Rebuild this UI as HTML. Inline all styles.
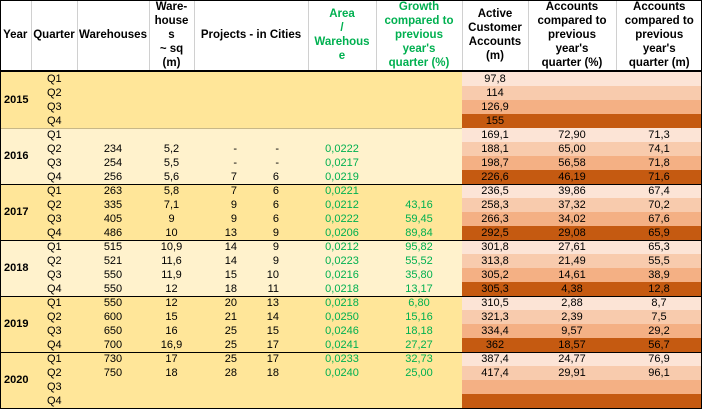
<!DOCTYPE html>
<html><head><meta charset="utf-8"><style>
html,body{margin:0;padding:0;background:#fff;}
body{width:702px;height:409px;overflow:hidden;position:relative;font-family:"Liberation Sans",Arial,sans-serif;font-size:11px;color:#000;}
table{border-collapse:collapse;table-layout:fixed;position:absolute;left:0;top:0;width:702px;}
td{padding:0;height:14px;line-height:14px;text-align:center;white-space:nowrap;overflow:hidden;}
th{font-weight:bold;height:70px;line-height:14px;vertical-align:middle;border-left:1px solid #d0d0d0;padding:0;font-size:11.5px;white-space:nowrap;overflow:hidden;}
th:first-child{border-left:none;}
thead tr{border-bottom:2px solid #000;}
.g{color:#00b050;}
.y{font-weight:bold;text-align:left;padding-left:4px;}
.q{text-align:left;padding-left:16px;}
.p1{text-align:right;padding-right:16px;}
.p2{text-align:right;padding-right:29px;}
.D td{background:#ffe699;}
.L td{background:#fff2cc;}
tr td.r1{background:#fce4d6;}
tr td.r2{background:#f8cbad;}
tr td.r3{background:#f4b084;}
tr td.r4{background:#c55a11;}
.ln{position:absolute;left:0;width:702px;height:1px;background:#000;}
.frame{position:absolute;left:0;top:0;width:700px;height:407px;border:1px solid #000;pointer-events:none;}
</style></head><body>
<table>
<colgroup><col style="width:31px"><col style="width:46px"><col style="width:72px"><col style="width:45px"><col style="width:59px"><col style="width:55px"><col style="width:68px"><col style="width:86px"><col style="width:66px"><col style="width:88px"><col style="width:86px"></colgroup>
<thead><tr>
<th>Year</th><th>Quarter</th><th>Warehouses</th><th>Ware-<br>house<br>s<br>~ sq<br>(m)</th><th colspan="2">Projects - in Cities</th><th class="g">Area<br>/<br>Warehous<br>e</th><th class="g">Growth<br>compared to<br>previous<br>year's<br>quarter (%)</th><th>Active<br>Customer<br>Accounts<br>(m)</th><th>Accounts<br>compared to<br>previous<br>year's<br>quarter (%)</th><th>Accounts<br>compared to<br>previous<br>year's<br>quarter (m)</th>
</tr></thead>
<tbody>
<tr class="D"><td class="y" rowspan="4">2015</td><td class="q">Q1</td><td></td><td></td><td></td><td></td><td></td><td></td><td class="r1">97,8</td><td class="r1"></td><td class="r1"></td></tr>
<tr class="D"><td class="q">Q2</td><td></td><td></td><td></td><td></td><td></td><td></td><td class="r2">114</td><td class="r2"></td><td class="r2"></td></tr>
<tr class="D"><td class="q">Q3</td><td></td><td></td><td></td><td></td><td></td><td></td><td class="r3">126,9</td><td class="r3"></td><td class="r3"></td></tr>
<tr class="D"><td class="q">Q4</td><td></td><td></td><td></td><td></td><td></td><td></td><td class="r4">155</td><td class="r4"></td><td class="r4"></td></tr>

<tr class="L"><td class="y" rowspan="4">2016</td><td class="q">Q1</td><td></td><td></td><td></td><td></td><td></td><td></td><td class="r1">169,1</td><td class="r1">72,90</td><td class="r1">71,3</td></tr>
<tr class="L"><td class="q">Q2</td><td>234</td><td>5,2</td><td class="p1">-</td><td class="p2">-</td><td class="g">0,0222</td><td></td><td class="r2">188,1</td><td class="r2">65,00</td><td class="r2">74,1</td></tr>
<tr class="L"><td class="q">Q3</td><td>254</td><td>5,5</td><td class="p1">-</td><td class="p2">-</td><td class="g">0,0217</td><td></td><td class="r3">198,7</td><td class="r3">56,58</td><td class="r3">71,8</td></tr>
<tr class="L"><td class="q">Q4</td><td>256</td><td>5,6</td><td class="p1">7</td><td class="p2">6</td><td class="g">0,0219</td><td></td><td class="r4">226,6</td><td class="r4">46,19</td><td class="r4">71,6</td></tr>

<tr class="D"><td class="y" rowspan="4">2017</td><td class="q">Q1</td><td>263</td><td>5,8</td><td class="p1">7</td><td class="p2">6</td><td class="g">0,0221</td><td></td><td class="r1">236,5</td><td class="r1">39,86</td><td class="r1">67,4</td></tr>
<tr class="D"><td class="q">Q2</td><td>335</td><td>7,1</td><td class="p1">9</td><td class="p2">6</td><td class="g">0,0212</td><td class="g">43,16</td><td class="r2">258,3</td><td class="r2">37,32</td><td class="r2">70,2</td></tr>
<tr class="D"><td class="q">Q3</td><td>405</td><td>9</td><td class="p1">9</td><td class="p2">6</td><td class="g">0,0222</td><td class="g">59,45</td><td class="r3">266,3</td><td class="r3">34,02</td><td class="r3">67,6</td></tr>
<tr class="D"><td class="q">Q4</td><td>486</td><td>10</td><td class="p1">13</td><td class="p2">9</td><td class="g">0,0206</td><td class="g">89,84</td><td class="r4">292,5</td><td class="r4">29,08</td><td class="r4">65,9</td></tr>

<tr class="L"><td class="y" rowspan="4">2018</td><td class="q">Q1</td><td>515</td><td>10,9</td><td class="p1">14</td><td class="p2">9</td><td class="g">0,0212</td><td class="g">95,82</td><td class="r1">301,8</td><td class="r1">27,61</td><td class="r1">65,3</td></tr>
<tr class="L"><td class="q">Q2</td><td>521</td><td>11,6</td><td class="p1">14</td><td class="p2">9</td><td class="g">0,0223</td><td class="g">55,52</td><td class="r2">313,8</td><td class="r2">21,49</td><td class="r2">55,5</td></tr>
<tr class="L"><td class="q">Q3</td><td>550</td><td>11,9</td><td class="p1">15</td><td class="p2">10</td><td class="g">0,0216</td><td class="g">35,80</td><td class="r3">305,2</td><td class="r3">14,61</td><td class="r3">38,9</td></tr>
<tr class="L"><td class="q">Q4</td><td>550</td><td>12</td><td class="p1">18</td><td class="p2">11</td><td class="g">0,0218</td><td class="g">13,17</td><td class="r4">305,3</td><td class="r4">4,38</td><td class="r4">12,8</td></tr>

<tr class="D"><td class="y" rowspan="4">2019</td><td class="q">Q1</td><td>550</td><td>12</td><td class="p1">20</td><td class="p2">13</td><td class="g">0,0218</td><td class="g">6,80</td><td class="r1">310,5</td><td class="r1">2,88</td><td class="r1">8,7</td></tr>
<tr class="D"><td class="q">Q2</td><td>600</td><td>15</td><td class="p1">21</td><td class="p2">14</td><td class="g">0,0250</td><td class="g">15,16</td><td class="r2">321,3</td><td class="r2">2,39</td><td class="r2">7,5</td></tr>
<tr class="D"><td class="q">Q3</td><td>650</td><td>16</td><td class="p1">25</td><td class="p2">15</td><td class="g">0,0246</td><td class="g">18,18</td><td class="r3">334,4</td><td class="r3">9,57</td><td class="r3">29,2</td></tr>
<tr class="D"><td class="q">Q4</td><td>700</td><td>16,9</td><td class="p1">25</td><td class="p2">17</td><td class="g">0,0241</td><td class="g">27,27</td><td class="r4">362</td><td class="r4">18,57</td><td class="r4">56,7</td></tr>

<tr class="D"><td class="y" rowspan="4">2020</td><td class="q">Q1</td><td>730</td><td>17</td><td class="p1">25</td><td class="p2">17</td><td class="g">0,0233</td><td class="g">32,73</td><td class="r1">387,4</td><td class="r1">24,77</td><td class="r1">76,9</td></tr>
<tr class="D"><td class="q">Q2</td><td>750</td><td>18</td><td class="p1">28</td><td class="p2">18</td><td class="g">0,0240</td><td class="g">25,00</td><td class="r2">417,4</td><td class="r2">29,91</td><td class="r2">96,1</td></tr>
<tr class="D"><td class="q">Q3</td><td></td><td></td><td></td><td></td><td></td><td></td><td class="r3"></td><td class="r3"></td><td class="r3"></td></tr>
<tr class="D"><td class="q">Q4</td><td></td><td></td><td></td><td></td><td></td><td></td><td class="r4"></td><td class="r4"></td><td class="r4"></td></tr>
</tbody></table>
<div class="ln" style="top:128px;width:462px;background:#c8b888"></div>
<div class="ln" style="top:184px"></div>
<div class="ln" style="top:240px"></div>
<div class="ln" style="top:296px"></div>
<div class="ln" style="top:352px"></div>
<div class="frame"></div>
</body></html>
